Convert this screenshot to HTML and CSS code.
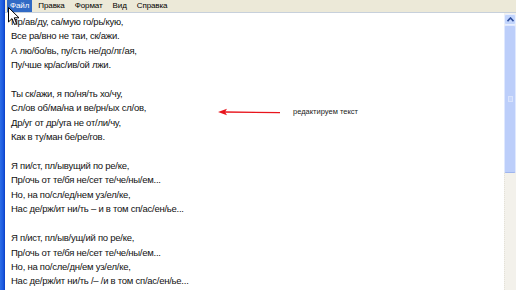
FILE: index.html
```html
<!DOCTYPE html>
<html lang="ru">
<head>
<meta charset="utf-8">
<link rel="stylesheet" href="styles.css">
</head>
<body>
<div class="window">
  <div class="frame-left"></div>
  <div class="main">
    <div class="menubar">
      <span class="menu-item active">Файл</span>
      <span class="menu-item">Правка</span>
      <span class="menu-item">Формат</span>
      <span class="menu-item">Вид</span>
      <span class="menu-item">Справка</span>
    </div>
    <div class="content">
      <div class="editor">
        <div class="text">
          <p>Пр/ав/ду, са/мую го/рь/кую,</p>
          <p>Все ра/вно не таи, ск/ажи.</p>
          <p>А лю/бо/вь, пу/сть не/до/лг/ая,</p>
          <p>Пу/чше кр/ас/ив/ой лжи.</p>
          <p>&nbsp;</p>
          <p>Ты ск/ажи, я по/ня/ть хо/чу,</p>
          <p>Сл/ов об/ма/на и ве/рн/ых сл/ов,</p>
          <p>Др/уг от др/уга не от/ли/чу,</p>
          <p>Как в ту/ман бе/ре/гов.</p>
          <p>&nbsp;</p>
          <p>Я пи/ст, пл/ывущий по ре/ке,</p>
          <p>Пр/очь от те/бя не/сет те/че/ны/ем...</p>
          <p>Но, на по/сл/ед/нем уз/ел/ке,</p>
          <p>Нас де/рж/ит ни/ть – и в том сп/ас/ен/ье...</p>
          <p>&nbsp;</p>
          <p>Я п/ист, пл/ыв/ущ/ий по ре/ке,</p>
          <p>Пр/очь от те/бя не/сет те/че/ны/ем...</p>
          <p>Но, на по/сле/дн/ем уз/ел/ке,</p>
          <p>Нас де/рж/ит ни/ть /– /и в том сп/ас/ен/ье...</p>
        </div>
        <div class="note">
          <svg class="note-arrow" width="64" height="8" viewBox="0 0 64 8">
            <line x1="6" y1="4" x2="62" y2="4.6" stroke="#e8141c" stroke-width="1.3"/>
            <path d="M0 4 L9 0.8 L7 4 L9 7.2 Z" fill="#e8141c"/>
          </svg>
          <span class="note-text">редактируем текст</span>
        </div>
      </div>
      <div class="scrollbar">
        <div class="sb-btn">
          <svg width="7" height="5" viewBox="0 0 7 5"><path d="M0.5 4.2 L3.5 1 L6.5 4.2" fill="none" stroke="#2f4f9e" stroke-width="1.6"/></svg>
        </div>
        <div class="sb-thumb"><span class="grip"></span></div>
        <div class="sb-track"></div>
      </div>
    </div>
  </div>
  <svg class="cursor" width="12" height="19" viewBox="0 0 12 19">
    <path d="M0.5 0.5 L0.5 15 L4 11.6 L6.5 17.5 L8.6 16.6 L6.2 10.8 L11 10.8 Z" fill="#fff" stroke="#000" stroke-width="1"/>
  </svg>
</div>
</body>
</html>
```
FILE: styles.css
```css
* { box-sizing: border-box; }
html, body { margin: 0; padding: 0; }
body {
  width: 516px;
  height: 290px;
  overflow: hidden;
  background: #fff;
  font-family: "Liberation Sans", Arial, sans-serif;
}
.window {
  position: relative;
  display: flex;
  width: 516px;
  height: 290px;
}
.frame-left {
  width: 5px;
  flex: none;
  background: linear-gradient(to right, #2e6ee6 0, #1b5ae0 60%, #0a3fc6 100%);
}
.main {
  flex: 1;
  display: flex;
  flex-direction: column;
  min-width: 0;
}
.menubar {
  height: 13px;
  flex: none;
  background: #ece9d8;
  border-bottom: 1px solid #c7d0db;
  display: flex;
  align-items: stretch;
  padding-left: 2px;
  font-size: 8px;
  letter-spacing: -0.1px;
  color: #000;
}
.menu-item {
  display: flex;
  align-items: center;
  padding: 0 4px 1px;
  margin-right: 2px;
  line-height: 1;
}
.menu-item.active {
  background: #316ac5;
  color: #fff;
  padding: 0 3px 1px 3px;
}
.content {
  flex: 1;
  display: flex;
  min-height: 0;
}
.editor {
  flex: 1;
  position: relative;
  background: #fff;
  padding: 2px 0 0 6px;
  overflow: hidden;
}
.text p {
  margin: 0;
  font-size: 9.5px;
  letter-spacing: -0.25px;
  line-height: 14.4px;
  color: #111;
  white-space: nowrap;
}
.note {
  position: absolute;
  left: 213px;
  top: 94px;
  display: flex;
  align-items: center;
  gap: 11px;
}
.note-arrow { display: block; }
.note-text {
  font-size: 7.5px;
  color: #222;
}
.scrollbar {
  width: 12px;
  flex: none;
  display: flex;
  flex-direction: column;
  padding: 1px 0 0 0;
  background: #f4f2ec;
}
.sb-btn {
  height: 11px;
  flex: none;
  background: #c3d5fc;
  border: 1px solid #e8efff;
  border-radius: 2px;
  display: flex;
  align-items: center;
  justify-content: center;
}
.sb-thumb {
  height: 148px;
  flex: none;
  background: #bccefa;
  border: 1px solid #dfe8fe;
  border-bottom-color: #9fb5ee;
  border-radius: 2px;
  display: flex;
  align-items: center;
  justify-content: center;
}
.grip {
  width: 5px;
  height: 6px;
  border: 1px solid #d8e2fc;
  background: #c7d6fb;
}
.sb-track {
  flex: 1;
  background: #f3f1eb;
  border-left: 1px dotted #e4e1d8;
}
.cursor {
  position: absolute;
  left: 8px;
  top: 7px;
}
```
